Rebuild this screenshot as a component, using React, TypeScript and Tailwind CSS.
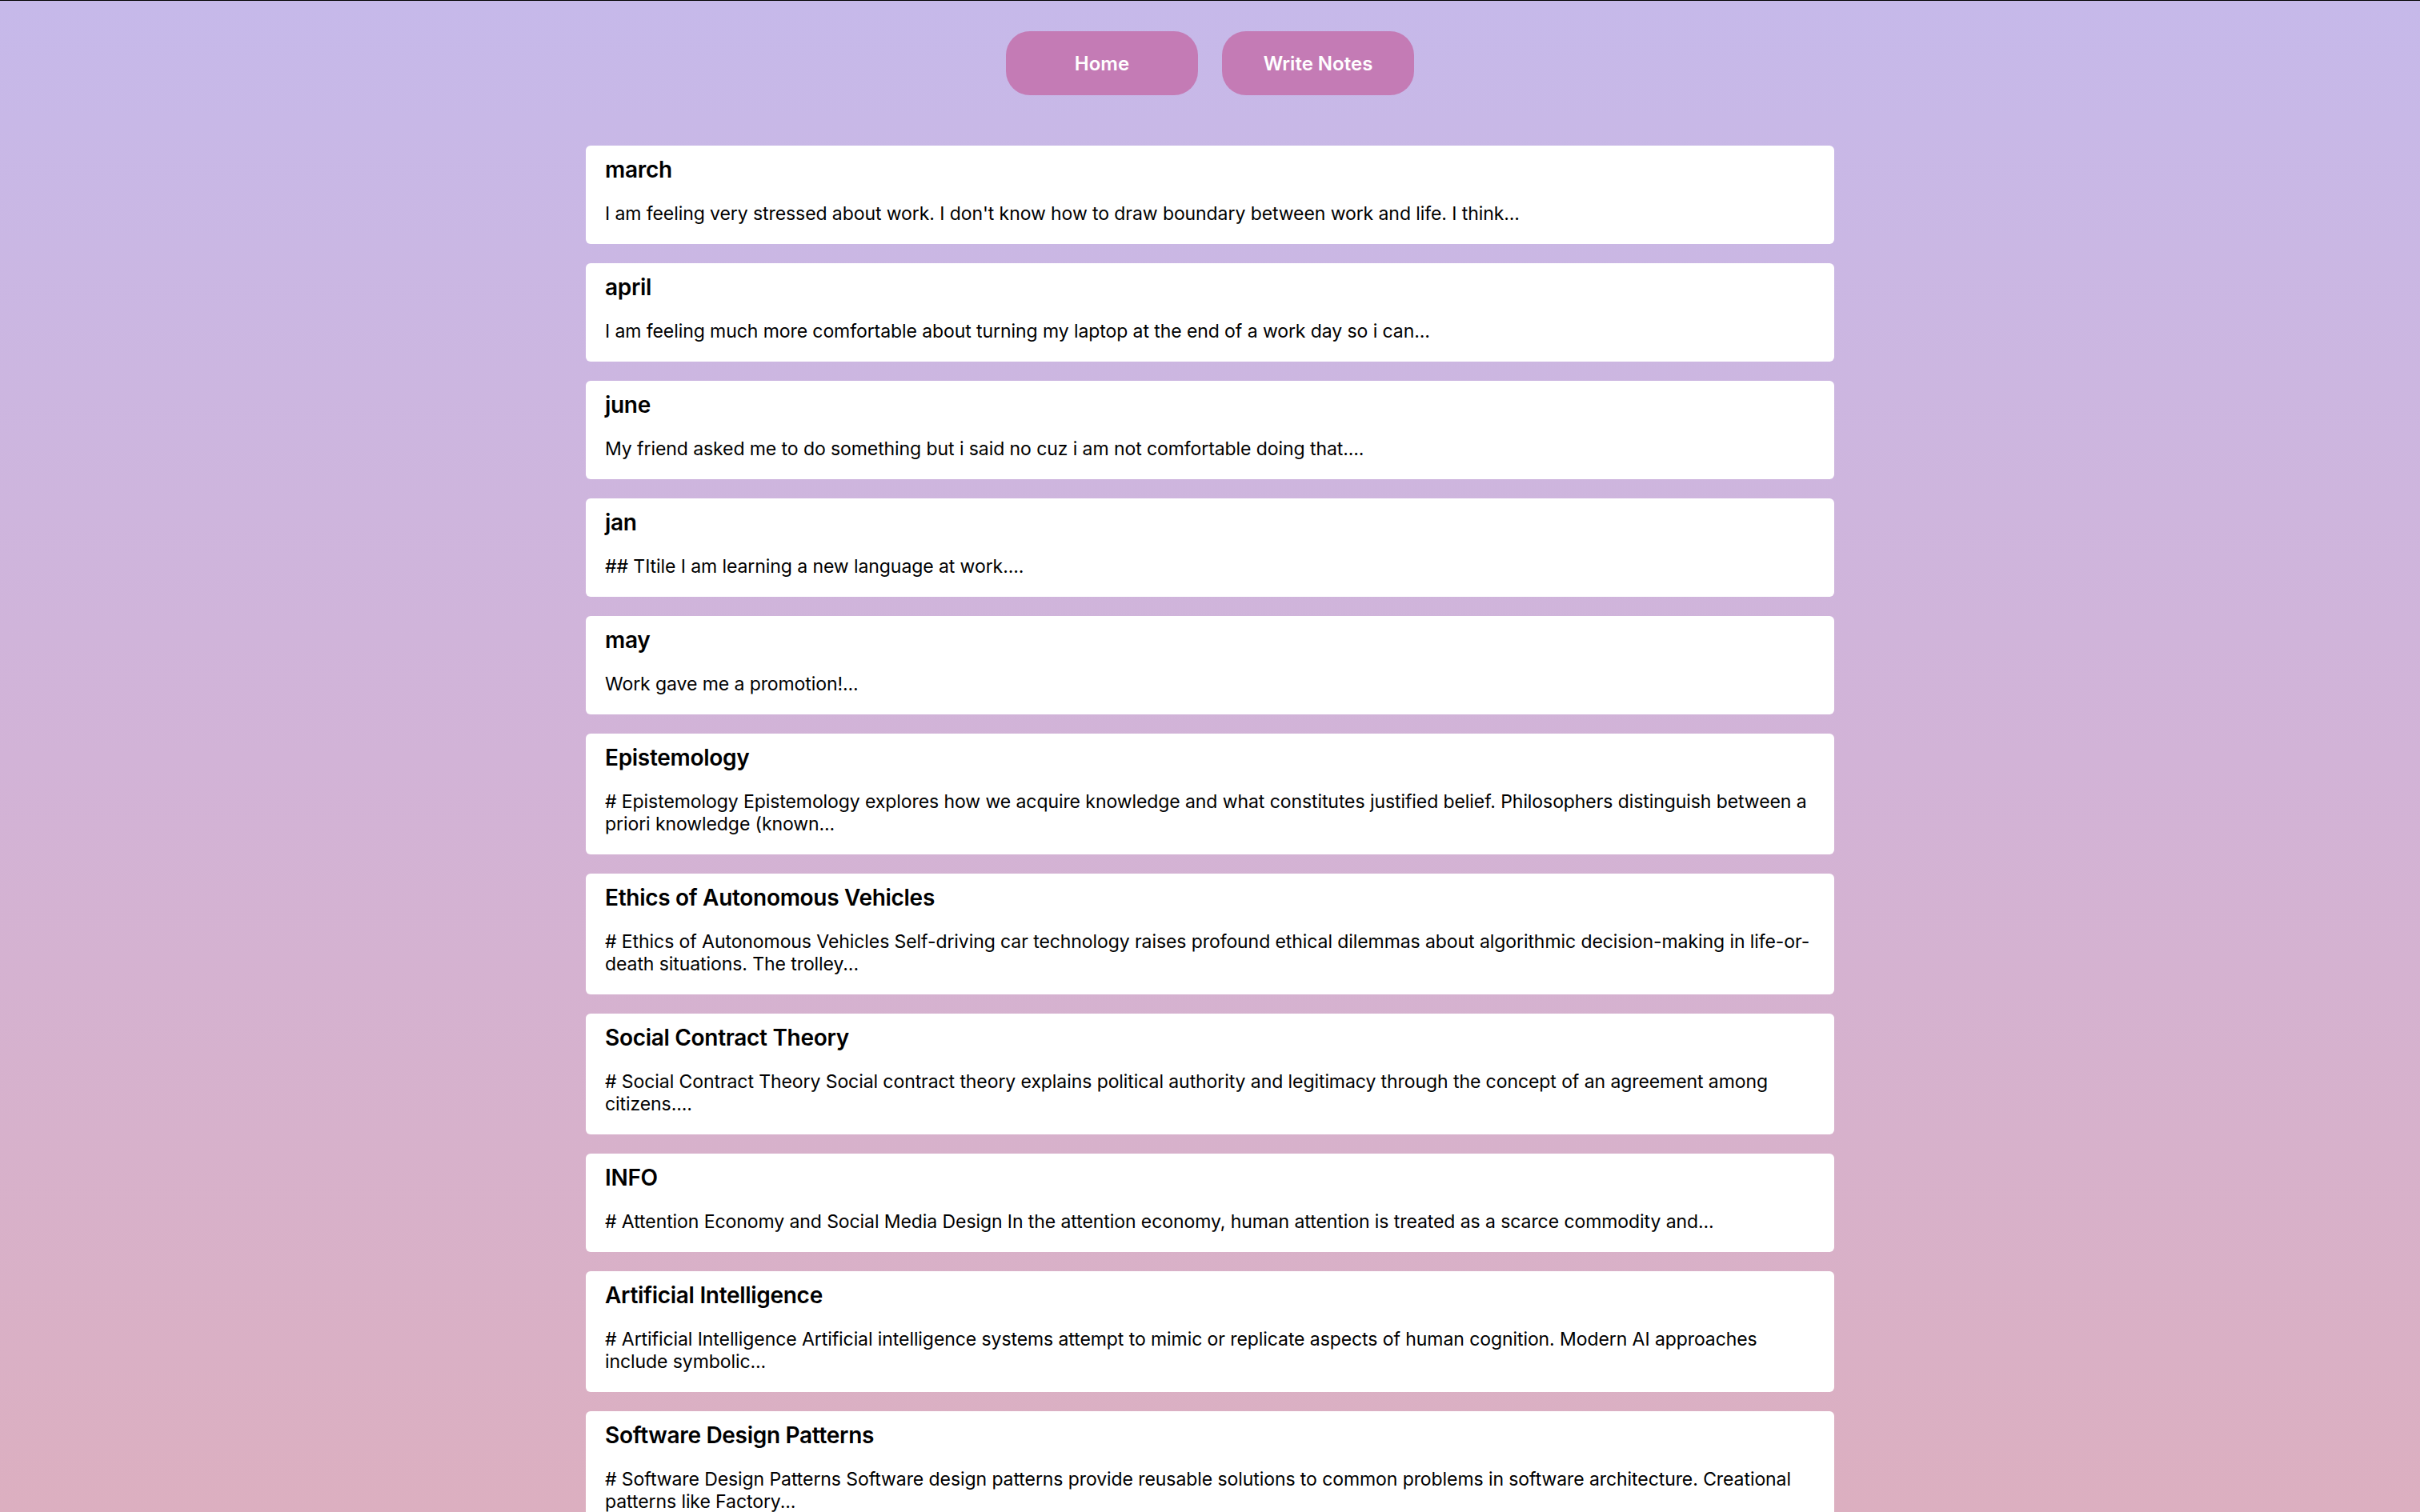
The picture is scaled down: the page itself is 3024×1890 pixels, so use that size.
import React from "react";

type Note = { title: string; lines: string[] };

const notes: Note[] = [
  { title: "march", lines: ["I am feeling very stressed about work. I don't know how to draw boundary between work and life. I think..."] },
  { title: "april", lines: ["I am feeling much more comfortable about turning my laptop at the end of a work day so i can..."] },
  { title: "june", lines: ["My friend asked me to do something but i said no cuz i am not comfortable doing that...."] },
  { title: "jan", lines: ["## TItile I am learning a new language at work...."] },
  { title: "may", lines: ["Work gave me a promotion!..."] },
  {
    title: "Epistemology",
    lines: [
      "# Epistemology Epistemology explores how we acquire knowledge and what constitutes justified belief. Philosophers distinguish between a",
      "priori knowledge (known...",
    ],
  },
  {
    title: "Ethics of Autonomous Vehicles",
    lines: [
      "# Ethics of Autonomous Vehicles Self-driving car technology raises profound ethical dilemmas about algorithmic decision-making in life-or-",
      "death situations. The trolley...",
    ],
  },
  {
    title: "Social Contract Theory",
    lines: [
      "# Social Contract Theory Social contract theory explains political authority and legitimacy through the concept of an agreement among",
      "citizens....",
    ],
  },
  { title: "INFO", lines: ["# Attention Economy and Social Media Design In the attention economy, human attention is treated as a scarce commodity and..."] },
  {
    title: "Artificial Intelligence",
    lines: [
      "# Artificial Intelligence Artificial intelligence systems attempt to mimic or replicate aspects of human cognition. Modern AI approaches",
      "include symbolic...",
    ],
  },
  {
    title: "Software Design Patterns",
    lines: [
      "# Software Design Patterns Software design patterns provide reusable solutions to common problems in software architecture. Creational",
      "patterns like Factory...",
    ],
  },
];

export default function App() {
  return (
    <div
      className="h-screen overflow-hidden bg-gradient-to-b from-[#c6b9ea] via-[#d2b3d7] to-[#dcafc0] text-black"
      style={{ fontFamily: "Inter, 'Noto Sans', sans-serif" }}
    >
      <div className="h-px bg-black" />
      <nav className="flex justify-center gap-[30px] pt-[38px]">
        <button className="w-[240px] h-[80px] rounded-[30px] bg-[#c47bb5] pt-[2px] text-white text-[24px] font-semibold">
          Home
        </button>
        <button className="w-[240px] h-[80px] rounded-[30px] bg-[#c47bb5] pt-[2px] text-white text-[24px] font-semibold">
          Write Notes
        </button>
      </nav>
      <main className="mx-auto mt-[63px] flex w-[1560px] flex-col gap-[24px]">
        {notes.map((n) => (
          <div key={n.title} className="rounded-[6px] bg-white px-[24px] pt-[12px] pb-[24px]">
            <h2 className="text-[28px] leading-[36px] font-semibold tracking-[-0.3px]">{n.title}</h2>
            <div className="mt-[23px] text-[23px] leading-[28px] tracking-[-0.08px]">
              {n.lines.map((l, i) => (
                <div key={i} className="whitespace-nowrap">
                  {l}
                </div>
              ))}
            </div>
          </div>
        ))}
      </main>
    </div>
  );
}
